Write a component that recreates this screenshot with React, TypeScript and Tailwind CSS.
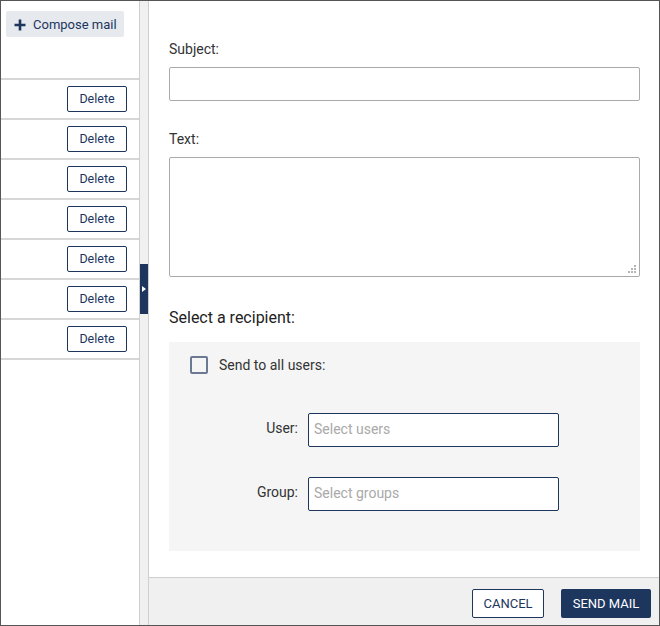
import React from "react";

function DeleteRow() {
  return (
    <div className="h-[40px] border-b-2 border-[#d6d6d6] flex items-start justify-end pr-[12px] pt-[6px]">
      <button className="h-[26px] w-[60px] border border-[#1c365e] rounded-[2px] bg-white text-[12.5px] text-[#1c365e] leading-none">
        Delete
      </button>
    </div>
  );
}

export default function App() {
  return (
    <div
      className="w-[660px] h-[626px] border border-[#555555] flex bg-white overflow-hidden"
      style={{ fontFamily: "Roboto, 'Liberation Sans', sans-serif" }}
    >
      {/* left panel */}
      <div className="w-[139px] shrink-0 border-r border-[#cfcfcf] flex flex-col">
        <div className="h-[77px] pt-[10px] pl-[5px]">
          <button className="h-[26px] w-[118px] rounded-[2px] bg-[#e6e9ee] flex items-center pl-[8px] pt-[1px] gap-[7px] text-[13px] text-[#1c365e]">
            <svg width="12" height="12" viewBox="0 0 12 12">
              <path d="M6 0.5v11M0.5 6h11" stroke="#1c365e" strokeWidth="2.6" />
            </svg>
            <span>Compose mail</span>
          </button>
        </div>
        <div className="border-t-2 border-[#d6d6d6]">
          {Array.from({ length: 7 }).map((_, i) => (
            <DeleteRow key={i} />
          ))}
        </div>
      </div>

      {/* splitter strip */}
      <div className="w-[9px] shrink-0 bg-[#f0f0f0] border-r border-[#cfcfcf] flex flex-col pt-[263px]">
        <div className="w-[8px] h-[50px] bg-[#1c365e] flex items-center justify-start pl-[2px]">
          <svg width="4" height="6" viewBox="0 0 4 6">
            <path d="M0 0L4 3L0 6Z" fill="#ffffff" />
          </svg>
        </div>
      </div>

      {/* right panel */}
      <div className="flex-1 flex flex-col">
        <div className="flex-1 pl-[20px] pr-[19px] pt-[38px]">
          <div className="text-[14px] leading-[20px] text-[#333333]">Subject:</div>
          <input className="mt-[8px] block w-full h-[34px] border border-[#aaaaaa] rounded-[2px] bg-white outline-none px-2 text-[14px]" />
          <div className="mt-[28px] text-[14px] leading-[20px] text-[#333333]">Text:</div>
          <div className="relative mt-[8px] h-[120px]">
            <textarea className="block w-full h-full border border-[#aaaaaa] rounded-[2px] bg-white outline-none resize-none" />
            <svg
              className="absolute right-[3px] bottom-[3px]"
              width="9"
              height="9"
              viewBox="0 0 9 9"
            >
              <rect x="6" y="0" width="2" height="2" fill="#b5b5b5" />
              <rect x="3" y="3" width="2" height="2" fill="#b5b5b5" />
              <rect x="6" y="3" width="2" height="2" fill="#b5b5b5" />
              <rect x="0" y="6" width="2" height="2" fill="#b5b5b5" />
              <rect x="3" y="6" width="2" height="2" fill="#b5b5b5" />
              <rect x="6" y="6" width="2" height="2" fill="#b5b5b5" />
            </svg>
          </div>
          <div className="mt-[29px] text-[16px] leading-[24px] text-[#222222]">Select a recipient:</div>
          <div className="mt-[12px] h-[209px] bg-[#f5f5f5] pt-[14px]">
            <div className="flex items-center pl-[21px] gap-[11px] h-[18px]">
              <div className="w-[18px] h-[18px] border-2 border-[#6b7a92] rounded-[2px]" />
              <span className="text-[14px] text-[#333333]">Send to all users:</span>
            </div>
            <div className="mt-[39px] flex items-center">
              <div className="w-[129px] text-right text-[14px] text-[#333333] pb-[3px]">User:</div>
              <div className="ml-[10px] w-[251px] h-[34px] border border-[#1c365e] rounded-[2px] bg-white flex items-center pl-[5px] pb-[1px] text-[14px] text-[#a9a9a9]">
                Select users
              </div>
            </div>
            <div className="mt-[30px] flex items-center">
              <div className="w-[129px] text-right text-[14px] text-[#333333] pb-[3px]">Group:</div>
              <div className="ml-[10px] w-[251px] h-[34px] border border-[#1c365e] rounded-[2px] bg-white flex items-center pl-[5px] pb-[1px] text-[14px] text-[#a9a9a9]">
                Select groups
              </div>
            </div>
          </div>
        </div>
        <div className="h-[48px] shrink-0 border-t border-[#cfcfcf] bg-[#f0f0f0] flex justify-end items-start pt-[11px] pr-[8px] gap-[17px]">
          <button className="h-[29px] w-[72px] border border-[#1c365e] rounded-[2px] bg-white text-[13px] text-[#1c365e]">
            CANCEL
          </button>
          <button className="h-[29px] w-[90px] rounded-[2px] bg-[#1c365e] text-[13px] text-white">
            SEND MAIL
          </button>
        </div>
      </div>
    </div>
  );
}
